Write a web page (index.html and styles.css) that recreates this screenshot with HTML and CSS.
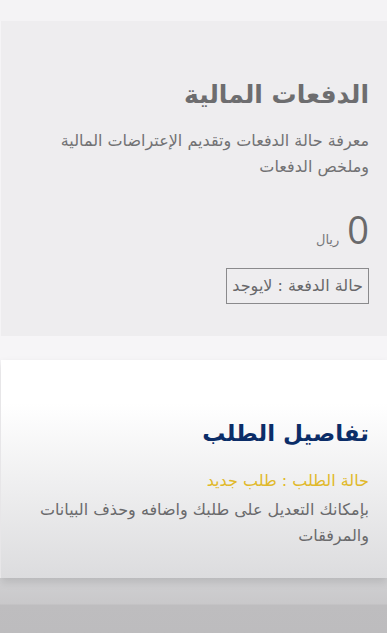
FILE: index.html
```html
<!DOCTYPE html>
<html lang="ar" dir="rtl">
<head>
    <meta charset="UTF-8">
    <meta name="viewport" content="width=device-width, initial-scale=1.0">
    <title>الطلب</title>
    <link rel="stylesheet" href="styles.css">
</head>
<body>
    <div class="top-band"></div>

    <section class="card payments">
        <h2 class="card-title">الدفعات المالية</h2>
        <p class="card-desc">معرفة حالة الدفعات وتقديم الإعتراضات المالية وملخص الدفعات</p>
        <div class="amount">
            <span class="amount-num">0</span>
            <span class="amount-cur">ريال</span>
        </div>
        <div class="pay-status">حالة الدفعة : لايوجد</div>
    </section>

    <div class="gap-band"></div>

    <section class="card order">
        <h2 class="card-title navy">تفاصيل الطلب</h2>
        <p class="order-status">حالة الطلب : طلب جديد</p>
        <p class="card-desc">بإمكانك التعديل على طلبك واضافه وحذف البيانات والمرفقات</p>
    </section>

    <div class="bottom-band"></div>
</body>
</html>
```

FILE: styles.css
```css
body {
    margin: 0;
    background: #f5f4f6;
    font-family: "DejaVu Sans", sans-serif;
    overflow: hidden;
}

.top-band {
    height: 21px;
    background: #f4f3f5;
}

.card {
    margin-left: 1px;
    padding: 0 18px 0 10px;
}

.payments {
    background: #eeedef;
    height: 315px;
    padding-top: 56px;
    box-sizing: border-box;
}

.card-title {
    margin: 0;
    font-size: 25px;
    font-weight: bold;
    color: #6d6d6f;
    line-height: 36px;
}

.card-title.navy {
    font-size: 23px;
    color: #0b2d68;
}

.card-desc {
    margin: 15px 0 0;
    font-size: 16px;
    line-height: 26px;
    color: #727274;
}

.amount {
    display: flex;
    align-items: baseline;
    gap: 8px;
    margin-top: 27px;
}

.amount-num {
    font-family: "Open Sans", sans-serif;
    font-size: 38px;
    color: #69696b;
    line-height: 44px;
}

.amount-cur {
    font-size: 13px;
    color: #77777a;
}

.pay-status {
    display: inline-block;
    margin-top: 17px;
    border: 1px solid #8a8a8c;
    padding: 0 5px;
    height: 34px;
    line-height: 34px;
    font-size: 16px;
    color: #68686a;
}

.gap-band {
    height: 24px;
    background: #f6f5f7;
}

.order {
    height: 218px;
    box-sizing: border-box;
    padding-top: 55px;
    background: linear-gradient(#ffffff 20%, #dcdcde);
    box-shadow: 0 4px 8px rgba(0, 0, 0, 0.12);
    position: relative;
}

.order-status {
    margin: 17px 0 0;
    font-size: 16px;
    color: #e1b92a;
    line-height: 26px;
}

.order .card-desc {
    margin-top: 3px;
    color: #6a6a6c;
}

.bottom-band {
    height: 80px;
    background: linear-gradient(#d0d0d2 0, #c9c8ca 26px, #bebdbf 27px, #bcbbbd);
}
```
